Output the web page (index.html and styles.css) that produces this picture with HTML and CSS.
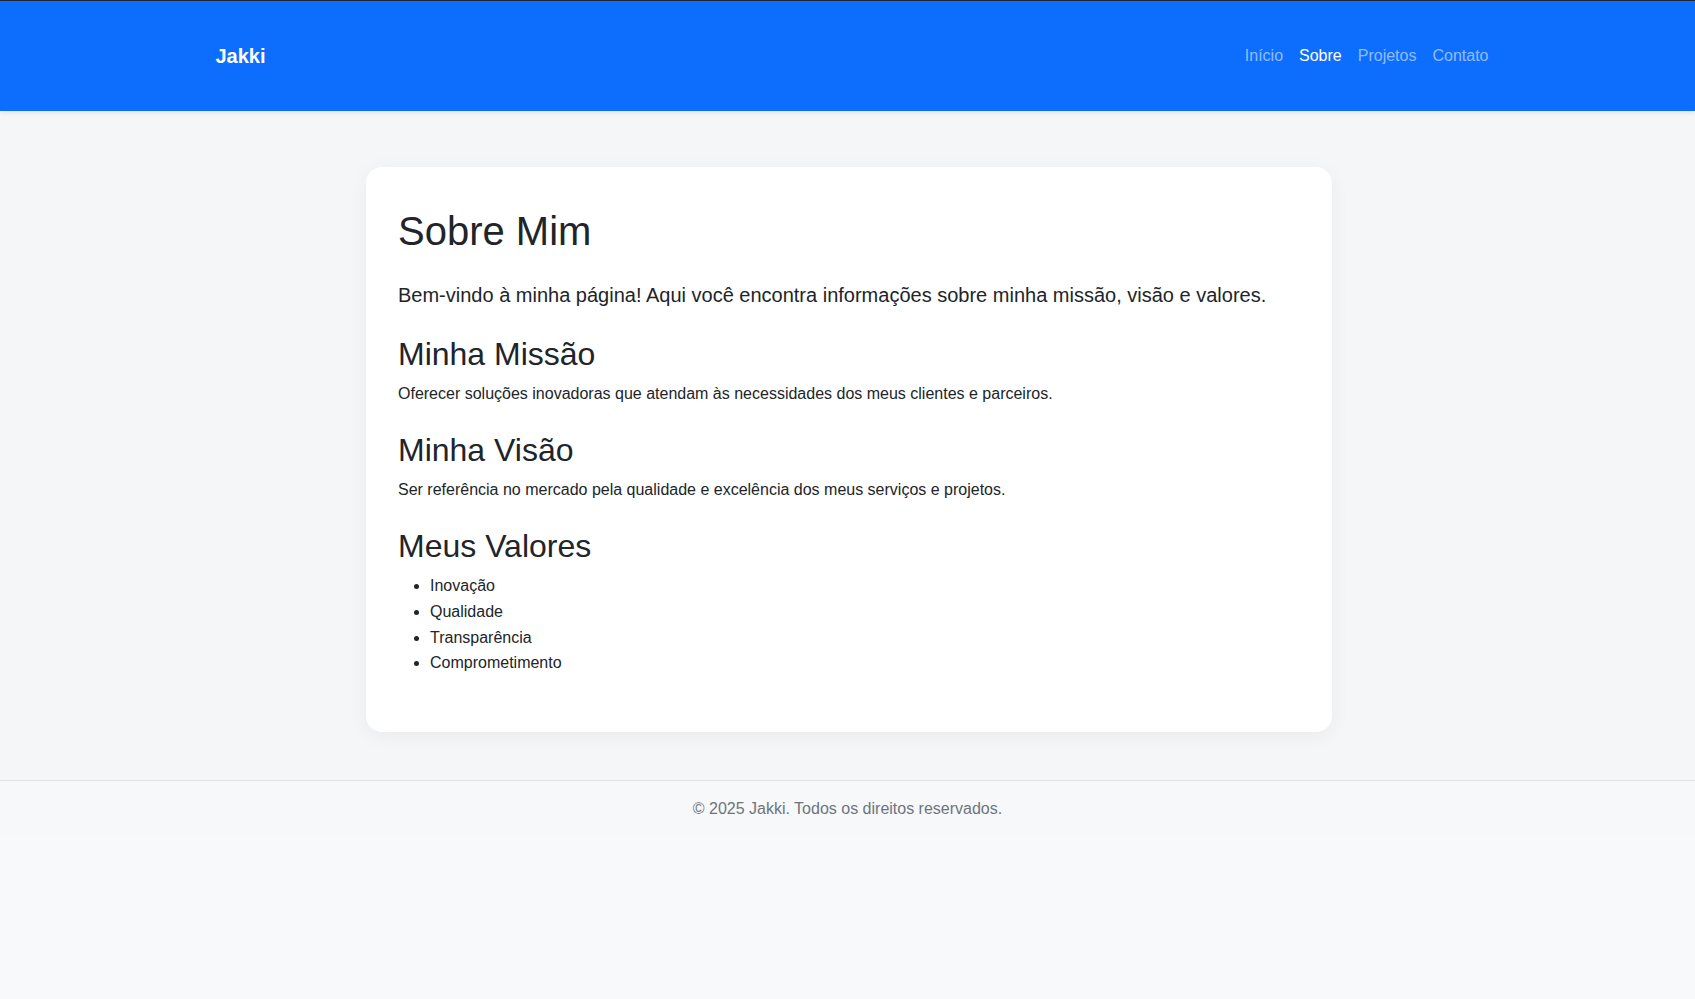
FILE: index.html
```html
<!DOCTYPE html>
<html lang="pt-BR">
<head>
<meta charset="utf-8">
<title>Sobre - Jakki</title>
<link rel="stylesheet" href="styles.css">
</head>
<body>
<header class="navbar">
  <div class="nav-container">
    <a class="brand" href="#">Jakki</a>
    <nav class="nav-links">
      <a class="nav-link" href="#">Início</a>
      <a class="nav-link active" href="#">Sobre</a>
      <a class="nav-link" href="#">Projetos</a>
      <a class="nav-link" href="#">Contato</a>
    </nav>
  </div>
</header>
<main class="main">
  <section class="card">
    <h1 class="title">Sobre Mim</h1>
    <p class="lead">Bem-vindo à minha página! Aqui você encontra informações sobre minha missão, visão e valores.</p>
    <h2 class="subtitle">Minha Missão</h2>
    <p class="text">Oferecer soluções inovadoras que atendam às necessidades dos meus clientes e parceiros.</p>
    <h2 class="subtitle">Minha Visão</h2>
    <p class="text">Ser referência no mercado pela qualidade e excelência dos meus serviços e projetos.</p>
    <h2 class="subtitle">Meus Valores</h2>
    <ul class="values">
      <li>Inovação</li>
      <li>Qualidade</li>
      <li>Transparência</li>
      <li>Comprometimento</li>
    </ul>
  </section>
</main>
<footer class="footer">
  <p class="footer-text">© 2025 Jakki. Todos os direitos reservados.</p>
</footer>
</body>
</html>
```
FILE: styles.css
```css
* { box-sizing: border-box; }
html { background: #f8f9fa; }
body {
  margin: 0;
  font-family: "Liberation Sans", Arial, sans-serif;
  font-size: 16px;
  line-height: 1.6;
  color: #212529;
  background: #f8f9fa;
}
.navbar {
  background: #0d6efd;
  border-top: 1px solid #1f2733;
  height: 111px;
  display: flex;
  align-items: center;
  box-shadow: 0 2px 5px rgba(0, 0, 0, 0.08);
  position: relative;
  z-index: 1;
}
.nav-container {
  width: 1320px;
  margin: 0 auto;
  padding: 0 11px 0 12px;
  display: flex;
  align-items: center;
  justify-content: space-between;
}
.brand {
  margin-left: 16px;
  color: #fff;
  font-weight: 700;
  font-size: 20px;
  line-height: 30px;
  text-decoration: none;
}
.nav-links { display: flex; }
.nav-link {
  padding: 8px;
  color: rgba(255, 255, 255, 0.55);
  text-decoration: none;
  font-size: 16px;
  line-height: 24px;
}
.nav-link.active { color: #fff; }
.main {
  background: #f5f6f8;
  padding: 56px 0 48px 3px;
}
.card {
  width: 966px;
  margin: 0 auto;
  background: #fff;
  border-radius: 16px;
  padding: 40px 32px;
  box-shadow: 0 4px 20px rgba(0, 0, 0, 0.05);
}
.title {
  margin: 0 0 24px;
  font-size: 40px;
  font-weight: 400;
  line-height: 1.2;
}
.lead {
  margin: 0 0 24px;
  font-size: 20px;
}
.subtitle {
  margin: 0 0 8px;
  font-size: 32px;
  font-weight: 400;
  line-height: 1.2;
}
.text { margin: 0 0 24px; }
.values {
  margin: 0 0 16px;
  padding-left: 32px;
}
.footer {
  border-top: 1px solid #dee2e6;
  background: #f7f8fa;
  padding: 16px 0;
  text-align: center;
}
.footer-text {
  margin: 0;
  line-height: 1.5;
  color: #6c757d;
}
```
